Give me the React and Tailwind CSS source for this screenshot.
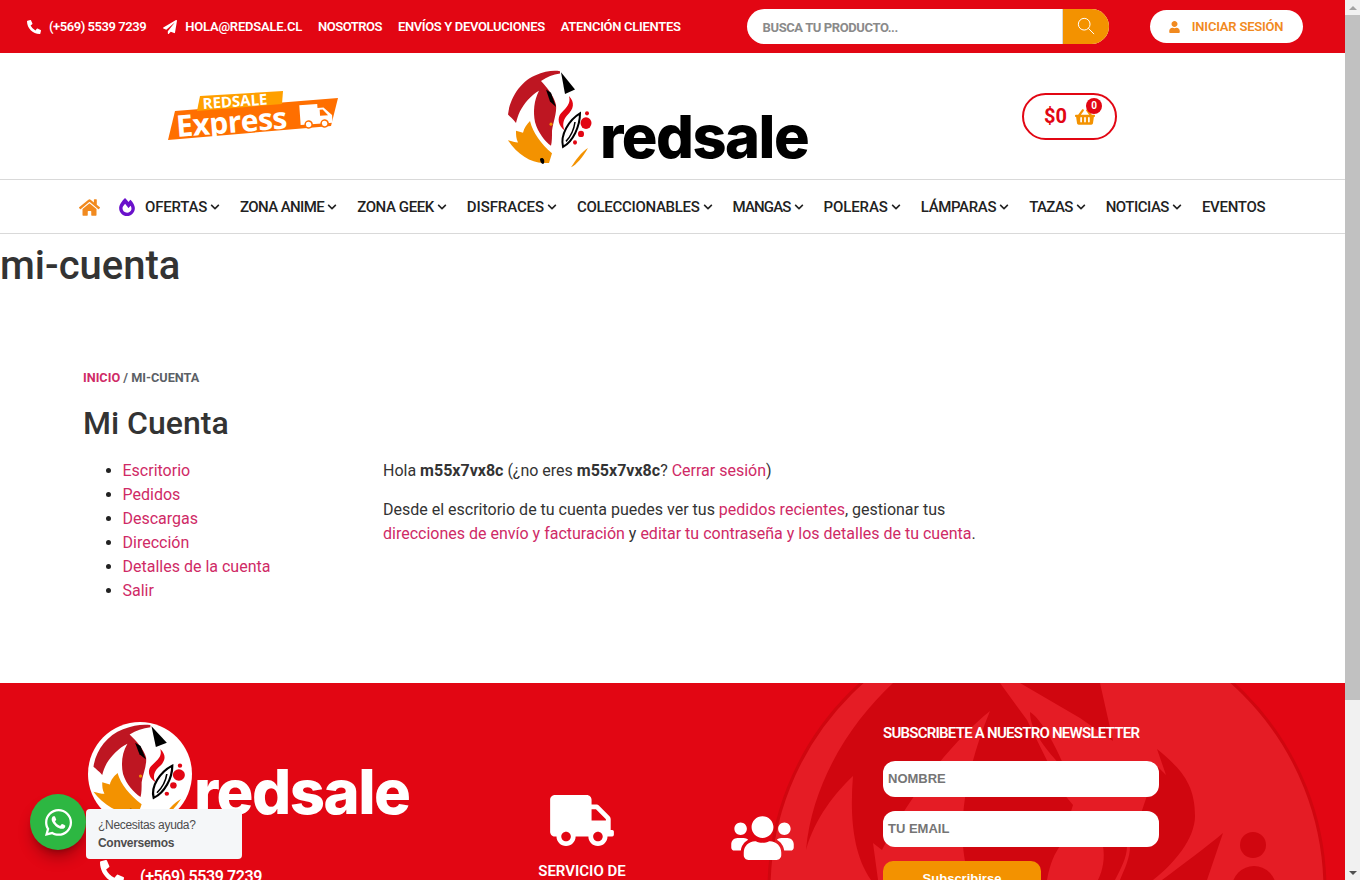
import React from 'react';
import {
  FaPhoneAlt,
  FaPaperPlane,
  FaUser,
  FaHome,
  FaFireAlt,
  FaChevronDown,
  FaShoppingBasket,
  FaTruck,
  FaUsers,
  FaWhatsapp,
} from 'react-icons/fa';

const navItems = [
  { label: 'OFERTAS', track: 'tracking-[-0.2px]', caret: true },
  { label: 'ZONA ANIME', track: 'tracking-[-0.6px]', caret: true },
  { label: 'ZONA GEEK', track: 'tracking-[-0.4px]', caret: true },
  { label: 'DISFRACES', track: 'tracking-[-0.1px]', caret: true },
  { label: 'COLECCIONABLES', track: 'tracking-[-0.3px]', caret: true },
  { label: 'MANGAS', track: 'tracking-[-0.85px]', caret: true },
  { label: 'POLERAS', track: 'tracking-[-0.1px]', caret: true },
  { label: 'LÁMPARAS', track: 'tracking-[-0.35px]', caret: true },
  { label: 'TAZAS', track: 'tracking-[-0.6px]', caret: true },
  { label: 'NOTICIAS', track: 'tracking-[-0.5px]', caret: true },
  { label: 'EVENTOS', track: 'tracking-[-0.3px]', caret: false },
];

const accountLinks = ['Escritorio', 'Pedidos', 'Descargas', 'Dirección', 'Detalles de la cuenta', 'Salir'];

// Fox mark of the logo, drawn in a 95x100 box
const LogoMark = ({ className, white = false }) => (
  <svg viewBox="0 0 95 100" preserveAspectRatio="none" className={className}>
    {white && <ellipse cx="47.5" cy="50" rx="47.5" ry="50" fill="#fff" />}
    <path d="M5 43C7 28 17 13 32 7 42 3 50 2 57 3L57 5C50 6 44 8 38 12 44 18 51 26 53 34 54 42 50 50 49 58 49 64 49 68 48 72 42 68 35 60 32 50 30 40 31 30 36 21 28 25 21 33 17 40 15 44 14 47 13 51 10 47 7 45 5 43Z" fill="#be1622" />
    <path d="M27 49C30 60 38 70 49 79L46 88 40 88C28 88 14 80 5 67 9 68 12 69 15 69 13 65 13 62 13 58L20 60C21 55 24 52 27 49Z" fill="#f39200" />
    <path d="M85 74C78 78 72 86 68 92 73 90 80 82 85 74Z" fill="#f39200" />
    <circle cx="48" cy="52" r="1.5" fill="#f39200" />
    <path d="M58 4 72 20 62 24Z" fill="#000" />
    <path d="M43 20 48 23 53 36 47 31Z" fill="#000" />
    <path d="M37 84C40 82 42 85 41 88 40 90 37 88 37 84Z" fill="#000" />
    <path d="M66 26C72 32 71 38 64 44 60 48 59 54 62 58 55 54 54 46 58 42 64 36 68 33 66 26Z" fill="#e20613" />
    <path d="M77 42C77 54 70 68 60 73 57 62 66 48 77 42Z" fill="#fff" stroke="#000" strokeWidth="2" />
    <path d="M72 50C71 57 67 64 63 68" fill="none" stroke="#000" strokeWidth="1.5" />
    <circle cx="83" cy="51" r="5.5" fill="#e20613" />
    <circle cx="78" cy="61" r="3" fill="#e20613" />
    <circle cx="84" cy="42" r="2" fill="#e20613" />
    <circle cx="72" cy="69" r="2" fill="#e20613" />
  </svg>
);

const ExpressBadge = () => (
  <svg viewBox="0 0 180 60" className="w-[180px] h-[60px]">
    <polygon points="8,51 15,22 178,9 171,37" fill="#ff6f00" />
    <polygon points="37,22 40,7 123,2 122,15" fill="#ffa000" />
    <text x="43" y="20" transform="rotate(-4 43 20)" fill="#fff" fontFamily="Open Sans, sans-serif" fontWeight="700" fontSize="15">REDSALE</text>
    <text x="17" y="48" transform="rotate(-4.5 17 48)" fill="#fff" fontFamily="Open Sans, sans-serif" fontWeight="700" fontSize="30" letterSpacing="-0.5">Express</text>
    <g transform="rotate(-4 156 26)">
      <path d="M140 15H158V19H164L172 27V35H140Z" fill="#fff" />
      <path d="M160 21H163L168 27H160Z" fill="#ff6f00" />
      <circle cx="148" cy="35" r="3.5" fill="#fff" stroke="#ff6f00" strokeWidth="1.5" />
      <circle cx="164" cy="35" r="3.5" fill="#fff" stroke="#ff6f00" strokeWidth="1.5" />
    </g>
  </svg>
);

// Big faded flame behind the newsletter form (x in page pixels, y from the footer top)
const FooterFlame = () => (
  <svg viewBox="0 0 1345 197" className="absolute inset-0 w-[1345px] h-[197px]">
    <circle cx="1047" cy="207" r="278" fill="#e51c25" stroke="#d0060f" strokeWidth="3" />
    <path d="M893 0C850 40 812 100 806 167 815 135 835 110 853 93 850 130 852 170 871 197H878L873 160 882 167C905 120 950 60 990 28 970 77 960 123 963 163 964 175 967 190 970 197H1047C1050 180 1055 170 1060 163L1073 122 1063 110 1027 37 1000 0Z" fill="#d0060f" />
    <path d="M1020 0 1080 35 1113 58 1100 0Z" fill="#d0060f" />
    <path d="M1030 29C1040 35 1055 60 1067 90 1050 70 1030 50 1030 29Z" fill="#d0060f" />
    <path d="M1157 66 1166 92 1157 83 1130 163C1130 175 1125 185 1120 197H1153C1175 180 1195 155 1195 133 1195 100 1180 85 1157 66Z" fill="#d0060f" />
    <path d="M1103 163H1127C1127 175 1120 187 1115 197H1098C1103 187 1105 175 1103 163Z" fill="#d0060f" />
    <path d="M1223 150 1207 197H1162C1185 180 1205 165 1223 150Z" fill="#d0060f" />
    <circle cx="1253" cy="162" r="13" fill="#d0060f" />
    <circle cx="1254" cy="205" r="22" fill="#d0060f" />
  </svg>
);

const Scrollbar = () => (
  <div className="w-[15px] h-[880px] bg-[#f1f1f1] flex flex-col shrink-0">
    <div className="h-[15px] flex items-center justify-center">
      <div className="w-0 h-0 border-x-[4px] border-x-transparent border-b-[4px] border-b-[#a3a3a3]" />
    </div>
    <div className="h-[685px] bg-[#c1c1c1]" />
    <div className="flex-1" />
    <div className="h-[15px] flex items-center justify-center">
      <div className="w-0 h-0 border-x-[4px] border-x-transparent border-t-[4px] border-t-[#505050]" />
    </div>
  </div>
);

const TopBar = () => (
  <div className="h-[53px] bg-[#e20613] flex items-center pl-[27px] text-white text-[13px] font-semibold tracking-[-0.2px]">
    <a className="flex items-center tracking-[-0.45px]">
      <FaPhoneAlt className="w-[14px] h-[14px] mr-2" />
      (+569) 5539 7239
    </a>
    <a className="flex items-center ml-[17px]">
      <FaPaperPlane className="w-[14px] h-[14px] mr-2" />
      HOLA@REDSALE.CL
    </a>
    <a className="ml-4 tracking-[-0.5px]">NOSOTROS</a>
    <a className="ml-4 tracking-[-0.35px]">ENVÍOS Y DEVOLUCIONES</a>
    <a className="ml-4 tracking-[-0.3px]">ATENCIÓN CLIENTES</a>
    <div className="ml-[66px] w-[362px] h-[35px] flex rounded-[18px] overflow-hidden bg-white">
      <div className="flex-1 flex items-center pl-[16px] pt-[2px] text-[#8a8a8a] text-[13px] font-bold tracking-[-0.4px]">BUSCA TU PRODUCTO...</div>
      <div className="w-[47px] bg-[#f39200] border-l border-[#d9d9d9] flex items-center justify-center pb-[1px]">
        <svg viewBox="0 0 20 20" className="w-[18px] h-[18px]" fill="none" stroke="#fff" strokeWidth="1.1">
          <circle cx="8" cy="8" r="6.5" />
          <path d="M12.6 12.6 19 19" />
        </svg>
      </div>
    </div>
    <a className="ml-[41px] w-[153px] h-[33px] bg-white rounded-[17px] flex items-center justify-center text-[#f18a1f] text-[13px]">
      <FaUser className="w-[11px] h-[12px] mr-3" />
      INICIAR SESIÓN
    </a>
  </div>
);

const Header = () => (
  <div className="h-[126px] flex items-center border-b border-[#d9d9d9] box-content">
    <div className="w-[503px] pl-[160px] pt-[5px]">
      <ExpressBadge />
    </div>
    <div className="w-[519px] flex items-end h-[108px] mt-[8px]">
      <LogoMark className="w-[95px] h-[108px] shrink-0 -mb-[2px]" />
      <span className="ml-[2px] mb-[8px] text-[59.5px] leading-[60px] font-extrabold text-black font-['Inter',sans-serif] tracking-[-1.5px]">redsale</span>
    </div>
    <div className="relative w-[95px] h-[47px] border-2 border-[#e20613] rounded-[24px] flex items-center pl-[20px]">
      <span className="text-[#e20613] text-[20px] font-bold">$0</span>
      <FaShoppingBasket className="ml-2 mt-[2px] w-[20px] h-[18px] text-[#f39200]" />
      <span className="absolute left-[62px] top-[3px] w-[16px] h-[16px] rounded-full bg-[#e20613] text-white text-[10px] font-bold flex items-center justify-center">0</span>
    </div>
  </div>
);

const Nav = () => (
  <div className="h-[52px] pt-[1px] pl-[79px] border-b border-[#d9d9d9] box-content flex items-center text-[15px] font-medium text-[#222]">
    <FaHome className="w-[21px] h-[19px] text-[#f18a1f] mr-[19px]" />
    <FaFireAlt className="w-[16px] h-[18px] text-[#6a11cb] mr-[10px]" />
    {navItems.map((item, i) => (
      <a key={item.label} className={`flex items-center ${item.track} ${i < navItems.length - 1 ? 'mr-5' : ''}`}>
        {item.label}
        {item.caret && <FaChevronDown className="w-[10px] h-[10px] ml-[3px]" />}
      </a>
    ))}
  </div>
);

const Account = () => (
  <div className="px-[83px]">
    <p className="text-[12.7px] leading-[16px] font-bold text-[#5b6066] pt-[75px]">
      <a className="text-[#cf2a66]">INICIO</a> / MI-CUENTA
    </p>
    <h2 className="mt-[19px] text-[32px] leading-[36px] font-medium text-[#333]">Mi Cuenta</h2>
    <div className="flex mt-[18px] text-[16px] leading-[24px] text-[#333]">
      <ul className="w-[300px] list-disc pl-[39.5px]">
        {accountLinks.map((link) => (
          <li key={link} className="text-[#222]">
            <a className="text-[#cf2a66]">{link}</a>
          </li>
        ))}
      </ul>
      <div className="w-[620px]">
        <p>
          Hola <strong className="font-bold">m55x7vx8c</strong> (¿no eres <strong className="font-bold">m55x7vx8c</strong>?{' '}
          <a className="text-[#cf2a66]">Cerrar sesión</a>)
        </p>
        <p className="mt-[15px]">
          Desde el escritorio de tu cuenta puedes ver tus <a className="text-[#cf2a66]">pedidos recientes</a>, gestionar tus{' '}
          <a className="text-[#cf2a66]">direcciones de envío y facturación</a> y{' '}
          <a className="text-[#cf2a66]">editar tu contraseña y los detalles de tu cuenta</a>.
        </p>
      </div>
    </div>
  </div>
);

const Footer = () => (
  <div className="relative h-[197px] bg-[#e20613] overflow-hidden text-white">
    <FooterFlame />
    <div className="relative flex">
      <div className="w-[447px] pl-[88px] pt-[39px]">
        <div className="flex items-end">
          <LogoMark white className="w-[104px] h-[104px] shrink-0" />
          <span className="ml-[2px] mb-[3px] text-[61.5px] leading-[62px] font-extrabold font-['Inter',sans-serif] tracking-[-1.5px]">redsale</span>
        </div>
        <div className="flex items-start mt-[38px] pl-[12px]">
          <FaPhoneAlt className="w-[24px] h-[24px] mr-[16px] -mt-[4px]" />
          <span className="text-[16px] font-semibold leading-[26px] tracking-[-0.4px]">(+569) 5539 7239</span>
        </div>
      </div>
      <div className="w-[180px] pt-[112px] flex flex-col items-center ml-[45px]">
        <FaTruck className="w-[64px] h-[51px]" />
        <span className="mt-[14px] text-[15px] font-semibold">SERVICIO DE</span>
      </div>
      <div className="w-[180px] pt-[130px] flex flex-col items-center">
        <FaUsers className="w-[63px] h-[50px]" />
      </div>
      <div className="ml-[31px] pt-[40px] w-[276px]">
        <h4 className="text-[15px] leading-[20px] font-semibold tracking-[-0.75px] whitespace-nowrap">SUBSCRIBETE A NUESTRO NEWSLETTER</h4>
        <div className="mt-[18px] h-[36px] rounded-[12px] bg-white flex items-center pl-[5px] text-[13px] font-bold text-[#757575] font-['Liberation_Sans',sans-serif]">NOMBRE</div>
        <div className="mt-[14px] h-[36px] rounded-[12px] bg-white flex items-center pl-[5px] text-[13px] font-bold text-[#757575] font-['Liberation_Sans',sans-serif]">TU EMAIL</div>
        <div className="mt-[14px] w-[158px] h-[36px] rounded-[10px] bg-[#f39200] flex items-center justify-center text-[13px] font-bold font-['Liberation_Sans',sans-serif]">Subscribirse</div>
      </div>
    </div>
  </div>
);

export default function App() {
  return (
    <div className="relative flex w-full h-[880px] overflow-hidden bg-white font-['Roboto',sans-serif]">
      <div className="flex-1 min-w-0">
        <TopBar />
        <Header />
        <Nav />
        <h1 className="h-[61px] text-[40px] leading-[64px] font-medium text-[#333]">mi-cuenta</h1>
        <div className="h-[388px]">
          <Account />
        </div>
        <Footer />
      </div>
      <Scrollbar />

      {/* WhatsApp floating widget */}
      <div className="absolute left-[30px] top-[794px] flex items-start">
        <div className="w-[56px] h-[56px] rounded-full bg-[#2db742] flex items-center justify-center shadow-lg shadow-black/30">
          <FaWhatsapp className="w-[31px] h-[31px] text-white" />
        </div>
        <div className="w-[156px] h-[50px] mt-[15px] rounded-[4px] bg-[#f5f7f9] pl-[12px] pt-[7px] text-[12px] leading-[18px] text-[#4d4d4d] font-['Liberation_Sans',sans-serif]">
          <p className="tracking-[-0.3px]">¿Necesitas ayuda?</p>
          <p className="font-bold tracking-[-0.3px]">Conversemos</p>
        </div>
      </div>
    </div>
  );
}
